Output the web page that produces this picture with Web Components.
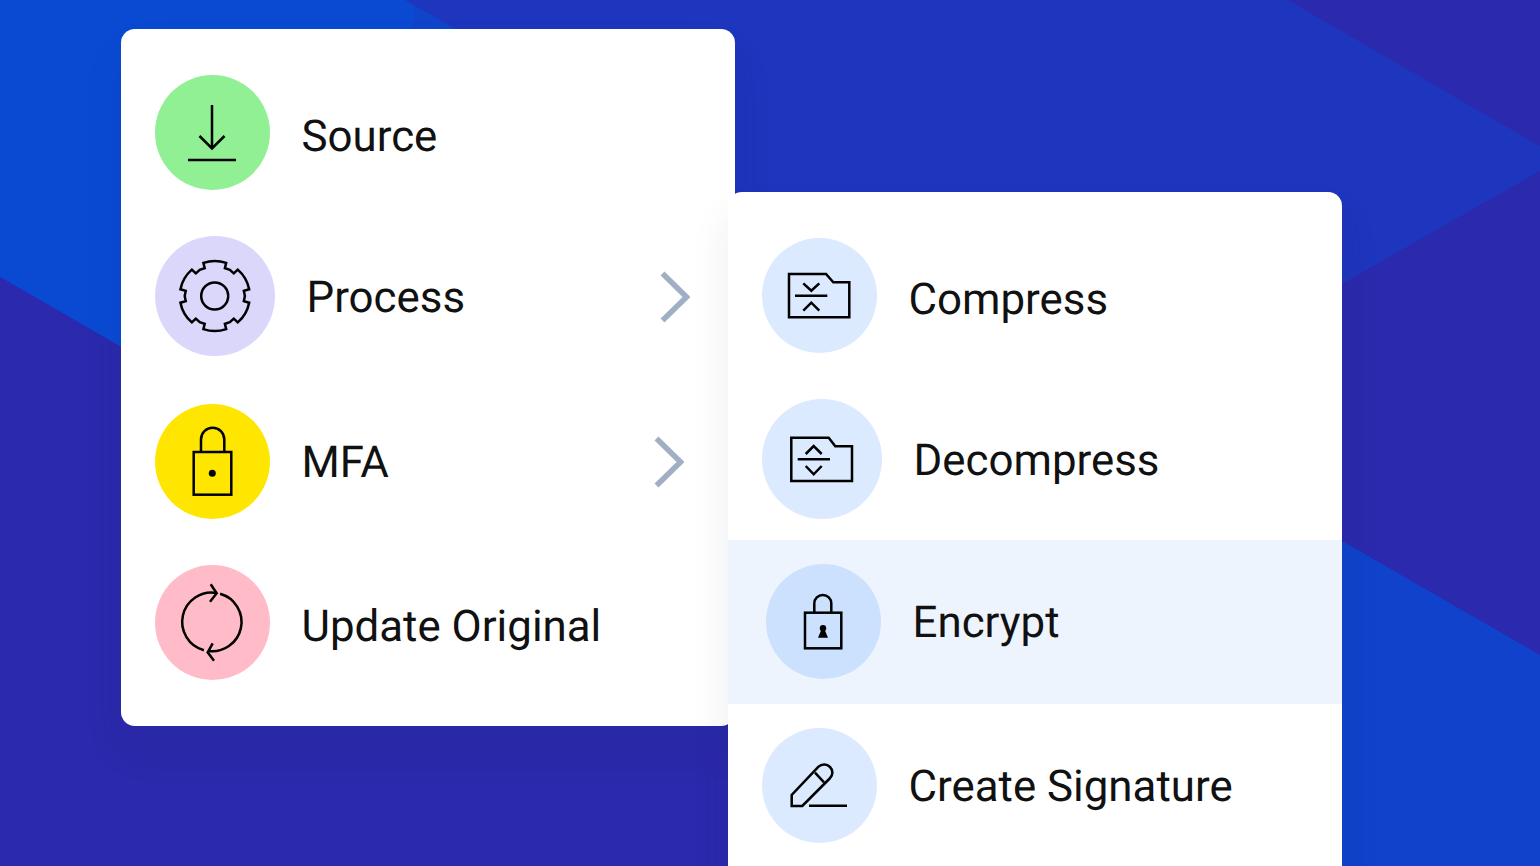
<!DOCTYPE html>
<html lang="en">
<head>
<meta charset="utf-8">
<title>Workflow menu</title>
<style>
  html, body { margin: 0; padding: 0; }
  body { font-family: Roboto, "Liberation Sans", sans-serif; }
</style>
</head>
<body>
<app-canvas>
  <menu-card>
    <menu-row nudge="7">
      <row-icon slot="icon" name="download" size="115" color="#90f093"></row-icon>
      Source
    </menu-row>
    <menu-row chevron="45" chevron-drop="2" nudge="2" style="margin-top:46px">
      <row-icon slot="icon" name="gear" size="120" color="#dad7fb"></row-icon>
      Process
    </menu-row>
    <menu-row chevron="51" nudge="1" style="margin-top:48px">
      <row-icon slot="icon" name="lock" size="115" color="#ffe600"></row-icon>
      MFA
    </menu-row>
    <menu-row nudge="7" style="margin-top:46px">
      <row-icon slot="icon" name="refresh" size="115" color="#ffbcc8"></row-icon>
      Update Original
    </menu-row>
  </menu-card>

  <menu-card sub>
    <menu-row nudge="6">
      <row-icon slot="icon" name="compress" size="115" color="#dbeafe"></row-icon>
      Compress
    </menu-row>
    <menu-row nudge="2" style="margin-top:46px">
      <row-icon slot="icon" name="decompress" size="120" color="#dbeafe"></row-icon>
      Decompress
    </menu-row>
    <menu-row active nudge="0" style="margin-top:21px">
      <row-icon slot="icon" name="encrypt" size="115" color="#cce1fe"></row-icon>
      Encrypt
    </menu-row>
    <menu-row nudge="0" style="margin-top:24px">
      <row-icon slot="icon" name="pen" size="115" color="#dbeafe"></row-icon>
      Create Signature
    </menu-row>
  </menu-card>
</app-canvas>

<script>
  // gear outline: six wide teeth, narrow valleys
  function gearPath(cx, cy, outer, inner) {
    const pt = (r, deg) => {
      const a = (deg * Math.PI) / 180;
      return `${(cx + r * Math.cos(a)).toFixed(2)} ${(cy + r * Math.sin(a)).toFixed(2)}`;
    };
    let d = "";
    for (let k = 0; k < 6; k++) {
      const a = -90 + 60 * k;
      d += `${k ? "L" : "M"}${pt(outer, a - 19)} A${outer} ${outer} 0 0 1 ${pt(outer, a + 19)} `;
      d += `L${pt(inner, a + 20)} L${pt(inner + 0.6, a + 30)} L${pt(inner, a + 40)} `;
    }
    return d + "Z";
  }

  const ICONS = {
    download: `<path d="M57 30V73M44.5 61L57 73.5L69.5 61M33 85H81"/>`,
    gear: `<path d="${gearPath(59.8, 60, 35, 29.5)}"/><circle cx="59.7" cy="60" r="13.5"/>`,
    lock: `<rect x="38.7" y="48" width="37.6" height="42.7"/>
           <path d="M46 48V35.4A11.65 11.65 0 0 1 69.3 35.4V48"/>
           <circle cx="57.3" cy="69.3" r="3.5" fill="#000" stroke="none"/>`,
    refresh: `<path d="M48.9 85.2A29.3 29.3 0 0 1 61.6 28.05M65.1 28.8A29.3 29.3 0 0 1 52.9 86"/>
              <path d="M55.7 19.3L61.7 28.3L55 36.7M57.7 78.3L52.7 87.3L59 95.7"/>`,
    compress: `<path d="M27 36H64L71.3 44.3H87.3V79.3H27Z"/>
               <path d="M33 57.7H65.3M41.3 45.3L49.3 52.7L57.3 45.3M41.3 72.7L49.3 64.7L57.3 72.7"/>`,
    decompress: `<path d="M29.3 38.7H66.7L73.3 47.3H90V82H29.3Z"/>
                 <path d="M35.7 60.3H68M43.7 55L51.7 47L59.7 55M43.7 67L51.7 75.3L59.7 67"/>`,
    encrypt: `<rect x="39" y="48.7" width="36.3" height="35.6"/>
              <path d="M48.3 48.7V39.5A8.5 8.5 0 0 1 65.3 39.5V48.7"/>
              <circle cx="57" cy="64.3" r="3.2" fill="#000" stroke="none"/>
              <path d="M55.5 65.5L52 73.7H62L58.5 65.5Z" fill="#000" stroke="none"/>`,
    pen: `<path d="M29.7 67V78H40.3L67.7 50.5C71.5 46.7 71 42 68 39C65 36 60 35.5 56.5 38.7Z"/>
          <path d="M53 44.7L62 54.3M47 77.7H85"/>`,
  };

  class RowIcon extends HTMLElement {
    connectedCallback() {
      const size = this.getAttribute("size") || 115;
      const color = this.getAttribute("color") || "#dbeafe";
      const name = this.getAttribute("name");
      this.attachShadow({ mode: "open" }).innerHTML = `
        <style>
          :host {
            display: block;
            width: ${size}px;
            height: ${size}px;
            border-radius: 50%;
            background-color: ${color};
          }
          svg {
            display: block;
            fill: none;
            stroke: #000;
            stroke-width: 2.5;
          }
        </style>
        <svg width="${size}" height="${size}" viewBox="0 0 ${size} ${size}">${ICONS[name] || ""}</svg>
      `;
    }
  }

  class MenuRow extends HTMLElement {
    connectedCallback() {
      const chevron = this.getAttribute("chevron");
      const drop = this.getAttribute("chevron-drop") || 0;
      const nudge = this.getAttribute("nudge") || 2;
      const active = this.hasAttribute("active");
      this.attachShadow({ mode: "open" }).innerHTML = `
        <style>
          :host {
            display: flex;
            align-items: center;
            padding: ${active ? "24px 0 25px 38px" : "0 0 0 34px"};
            background-color: ${active ? "#eef4fe" : "transparent"};
            color: #111;
            font-size: 43.85px;
            text-rendering: geometricPrecision;
          }
          .label {
            margin-left: 31.5px;
            margin-top: ${nudge}px;
            white-space: nowrap;
          }
          .chevron {
            display: block;
            margin-left: auto;
            margin-top: ${drop}px;
            margin-right: ${chevron}px;
            fill: none;
            stroke: #a0afc4;
            stroke-width: 5.5;
          }
        </style>
        <slot name="icon"></slot>
        <span class="label"><slot></slot></span>
        ${chevron ? `<svg class="chevron" width="30" height="52" viewBox="0 0 30 52"><path d="M2.5 2.5L26.5 26L2.5 49.5"/></svg>` : ""}
      `;
    }
  }

  class MenuCard extends HTMLElement {
    connectedCallback() {
      const sub = this.hasAttribute("sub");
      this.attachShadow({ mode: "open" }).innerHTML = `
        <style>
          :host {
            display: block;
            flex: none;
            width: 614px;
            box-sizing: border-box;
            padding: 46px 0;
            border-radius: 14px;
            background-color: #fff;
            box-shadow: 0 24px 40px rgba(30, 40, 60, 0.08);
            margin: ${sub ? "163px 0 0 -7px" : "0"};
          }
        </style>
        <slot></slot>
      `;
    }
  }

  class AppCanvas extends HTMLElement {
    connectedCallback() {
      this.attachShadow({ mode: "open" }).innerHTML = `
        <style>
          :host {
            display: flex;
            align-items: flex-start;
            position: relative;
            box-sizing: border-box;
            width: 1540px;
            height: 866px;
            padding: 29px 0 0 121px;
            overflow: hidden;
            background-color: #1e35bd;
          }
          .bg {
            position: absolute;
            inset: 0;
          }
          .cards {
            display: flex;
            align-items: flex-start;
            position: relative;
          }
        </style>
        <svg class="bg" width="1540" height="866" viewBox="0 0 1540 866">
          <polygon fill="#0a4ad3" points="0,0 405,0 735,190 735,701 0,277"/>
          <polygon fill="#1044cb" points="413,5 452,28 413,28"/>
          <polygon fill="#2b29ad" points="0,277 735,701 735,866 0,866"/>
          <polygon fill="#2b29ad" points="1288,0 1540,0 1540,146"/>
          <polygon fill="#2b29ad" points="1540,171 1342,284 1342,541 1540,655"/>
          <polygon fill="#1042cb" points="1342,541 1540,655 1540,866 1342,866"/>
        </svg>
        <div class="cards"><slot></slot></div>
      `;
    }
  }

  customElements.define("row-icon", RowIcon);
  customElements.define("menu-row", MenuRow);
  customElements.define("menu-card", MenuCard);
  customElements.define("app-canvas", AppCanvas);
</script>
</body>
</html>
